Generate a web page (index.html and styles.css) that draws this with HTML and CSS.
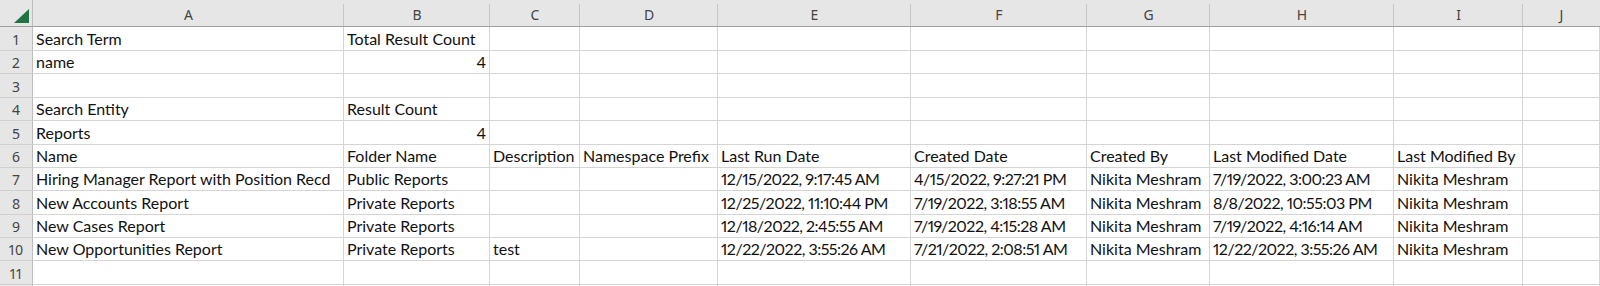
FILE: index.html
```html
<!DOCTYPE html>
<html>
<head>
<meta charset="utf-8">
<link rel="stylesheet" href="styles.css">
</head>
<body>
<div class="sheet">
  <div class="corner"><svg width="15" height="14" viewBox="0 0 15 14"><polygon points="15,0 15,14 0,14" fill="#217346"/></svg></div>
  <div class="colhdr">A</div><div class="colhdr">B</div><div class="colhdr">C</div><div class="colhdr">D</div><div class="colhdr">E</div><div class="colhdr">F</div><div class="colhdr">G</div><div class="colhdr">H</div><div class="colhdr">I</div><div class="colhdr last">J</div>

  <div class="rowhdr">1</div><div class="cell">Search Term</div><div class="cell">Total Result Count</div><div class="cell"></div><div class="cell"></div><div class="cell"></div><div class="cell"></div><div class="cell"></div><div class="cell"></div><div class="cell"></div><div class="cell"></div>

  <div class="rowhdr">2</div><div class="cell">name</div><div class="cell num">4</div><div class="cell"></div><div class="cell"></div><div class="cell"></div><div class="cell"></div><div class="cell"></div><div class="cell"></div><div class="cell"></div><div class="cell"></div>

  <div class="rowhdr">3</div><div class="cell"></div><div class="cell"></div><div class="cell"></div><div class="cell"></div><div class="cell"></div><div class="cell"></div><div class="cell"></div><div class="cell"></div><div class="cell"></div><div class="cell"></div>

  <div class="rowhdr">4</div><div class="cell">Search Entity</div><div class="cell">Result Count</div><div class="cell"></div><div class="cell"></div><div class="cell"></div><div class="cell"></div><div class="cell"></div><div class="cell"></div><div class="cell"></div><div class="cell"></div>

  <div class="rowhdr">5</div><div class="cell">Reports</div><div class="cell num">4</div><div class="cell"></div><div class="cell"></div><div class="cell"></div><div class="cell"></div><div class="cell"></div><div class="cell"></div><div class="cell"></div><div class="cell"></div>

  <div class="rowhdr">6</div><div class="cell">Name</div><div class="cell">Folder Name</div><div class="cell">Description</div><div class="cell">Namespace Prefix</div><div class="cell">Last Run Date</div><div class="cell">Created Date</div><div class="cell">Created By</div><div class="cell">Last Modified Date</div><div class="cell">Last Modified By</div><div class="cell"></div>

  <div class="rowhdr">7</div><div class="cell">Hiring Manager Report with Position Recd</div><div class="cell">Public Reports</div><div class="cell"></div><div class="cell"></div><div class="cell date">12/15/2022, 9:17:45 AM</div><div class="cell date">4/15/2022, 9:27:21 PM</div><div class="cell">Nikita Meshram</div><div class="cell date">7/19/2022, 3:00:23 AM</div><div class="cell">Nikita Meshram</div><div class="cell"></div>

  <div class="rowhdr">8</div><div class="cell">New Accounts Report</div><div class="cell">Private Reports</div><div class="cell"></div><div class="cell"></div><div class="cell date">12/25/2022, 11:10:44 PM</div><div class="cell date">7/19/2022, 3:18:55 AM</div><div class="cell">Nikita Meshram</div><div class="cell date">8/8/2022, 10:55:03 PM</div><div class="cell">Nikita Meshram</div><div class="cell"></div>

  <div class="rowhdr">9</div><div class="cell">New Cases Report</div><div class="cell">Private Reports</div><div class="cell"></div><div class="cell"></div><div class="cell date">12/18/2022, 2:45:55 AM</div><div class="cell date">7/19/2022, 4:15:28 AM</div><div class="cell">Nikita Meshram</div><div class="cell date">7/19/2022, 4:16:14 AM</div><div class="cell">Nikita Meshram</div><div class="cell"></div>

  <div class="rowhdr">10</div><div class="cell">New Opportunities Report</div><div class="cell">Private Reports</div><div class="cell">test</div><div class="cell"></div><div class="cell date">12/22/2022, 3:55:26 AM</div><div class="cell date">7/21/2022, 2:08:51 AM</div><div class="cell">Nikita Meshram</div><div class="cell date">12/22/2022, 3:55:26 AM</div><div class="cell">Nikita Meshram</div><div class="cell"></div>

  <div class="rowhdr">11</div><div class="cell"></div><div class="cell"></div><div class="cell"></div><div class="cell"></div><div class="cell"></div><div class="cell"></div><div class="cell"></div><div class="cell"></div><div class="cell"></div><div class="cell"></div>

  <div class="rowhdr"></div><div class="cell"></div><div class="cell"></div><div class="cell"></div><div class="cell"></div><div class="cell"></div><div class="cell"></div><div class="cell"></div><div class="cell"></div><div class="cell"></div><div class="cell"></div>
</div>
</body>
</html>
```

FILE: styles.css
```css
html, body {
  margin: 0;
  padding: 0;
  background: #ffffff;
  overflow: hidden;
  width: 1600px;
  height: 286px;
}

.sheet {
  display: grid;
  grid-template-columns: 33px 311px 146px 90px 138px 193px 176px 123px 184px 129px 1fr;
  grid-template-rows: 27px 24px 23px 24px 23px 24px 23px 23px 24px 23px 23px 24px 24px;
  height: 286px;
  overflow: hidden;
  font-family: Lato, "Liberation Sans", sans-serif;
  font-size: 16px;
  font-variant-numeric: proportional-nums;
  font-feature-settings: "pnum" 1;
  color: #111111;
}

.sheet > div {
  box-sizing: border-box;
  min-width: 0;
}

.corner {
  background: #e6e6e6;
  border-right: 1px solid #bdbdbd;
  border-bottom: 1px solid #9f9f9f;
  display: flex;
  align-items: flex-end;
  justify-content: flex-end;
  padding: 0 3px 3px 0;
}

.corner svg {
  display: block;
}

.colhdr {
  background: linear-gradient(#c6c6c6, #c6c6c6) right 4px / 1px calc(100% - 4px) no-repeat, #e6e6e6;
  border-bottom: 1px solid #9f9f9f;
  display: flex;
  align-items: center;
  justify-content: center;
  font-family: "Noto Sans", "Open Sans", sans-serif;
  font-size: 14px;
  color: #444444;
  padding-top: 2px;
}

.colhdr.last {
  background: #e6e6e6;
}

.rowhdr {
  background: #e6e6e6;
  border-right: 1px solid #bdbdbd;
  border-bottom: 1px solid #d0d0d0;
  display: flex;
  align-items: center;
  justify-content: center;
  font-family: "Noto Sans", "Open Sans", sans-serif;
  font-size: 14px;
  color: #444444;
  padding-top: 1px;
}

.cell {
  border-right: 1px solid #d4d4d4;
  border-bottom: 1px solid #d4d4d4;
  display: flex;
  align-items: flex-end;
  padding: 0 3px 1px 3px;
  line-height: 20px;
  white-space: nowrap;
}

.cell.num {
  justify-content: flex-end;
}

.cell.date {
  letter-spacing: -0.5px;
}
```
